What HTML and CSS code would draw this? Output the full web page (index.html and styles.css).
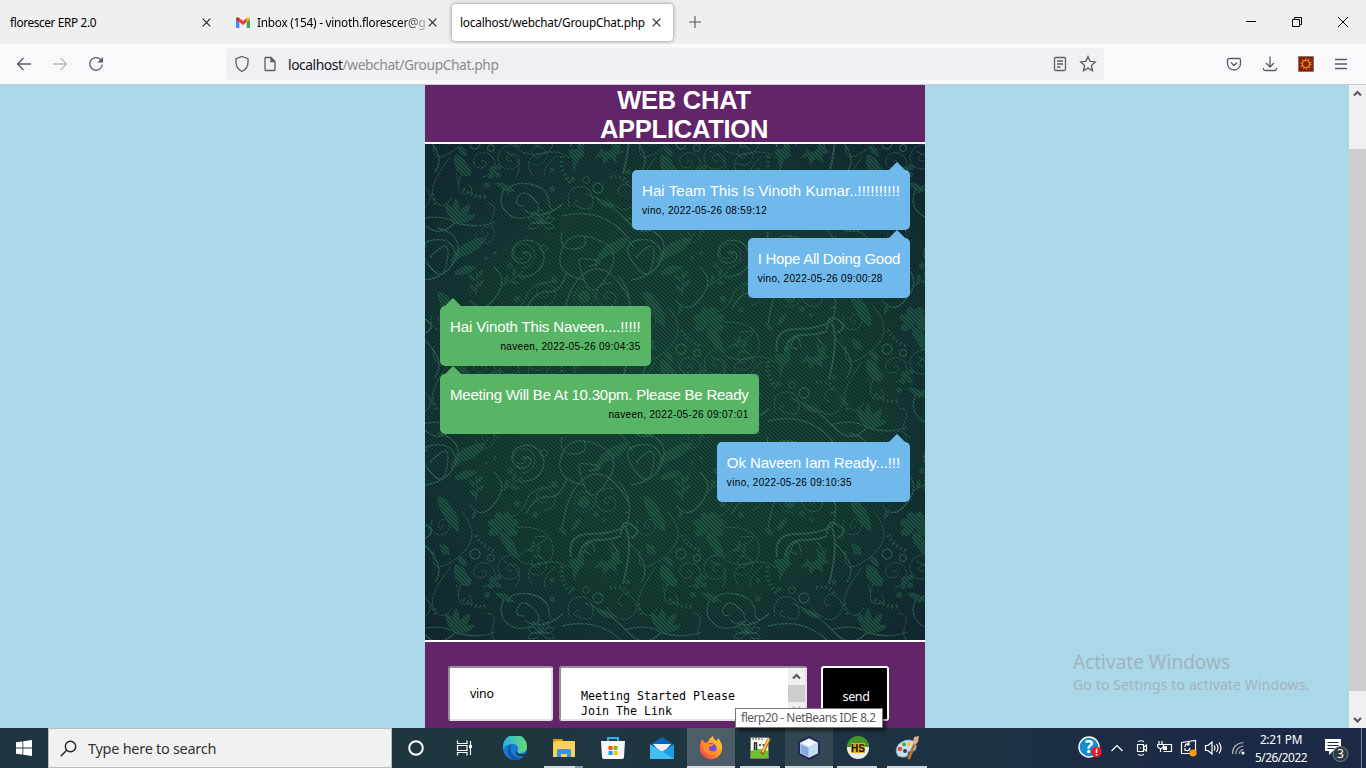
FILE: index.html
```html
<!DOCTYPE html>
<html lang="en">
<head>
<meta charset="utf-8">
<title>Group Chat</title>
<link rel="stylesheet" href="styles.css">
</head>
<body>
<div class="tabs">
  <div class="tab tab-a"><span class="t1">florescer ERP 2.0</span><svg class="x" width="9" height="9" viewBox="0 0 9 9"><path d="M.7.7l7.6 7.6M8.3.7L.7 8.3"/></svg></div>
  <div class="tab tab-b">
    <svg width="14" height="11" viewBox="0 0 14 11"><path fill="#4285f4" d="M0 2v8q0 1 1 1h2.300V4z"/><path fill="#34a853" d="M14 2v8q0 1-1 1h-2.300V4z"/><path fill="#ea4335" d="M3.200 1L7 4l3.800-3v4L7 8 3.200 5z"/><path fill="#c5221f" d="M0 2Q0 .2 1.400.2 2.400.2 3.300 1v4L0 2.600z"/><path fill="#fbbc04" d="M14 2Q14 .2 12.600.2q-1 0-1.900.8v4L14 2.600z"/></svg>
    <span class="t2">Inbox (154) - vinoth.florescer@g</span><svg class="x" width="9" height="9" viewBox="0 0 9 9"><path d="M.7.7l7.6 7.6M8.3.7L.7 8.3"/></svg></div>
  <div class="tab tab-c"><span class="t3">localhost/webchat/GroupChat.php</span><svg class="x" width="9" height="9" viewBox="0 0 9 9"><path d="M.7.7l7.6 7.6M8.3.7L.7 8.3"/></svg></div>
  <svg class="plus" width="12" height="12" viewBox="0 0 12 12"><path d="M6 0v12M0 6h12"/></svg>
  <div class="win">
    <svg width="12" height="12" viewBox="0 0 12 12"><path d="M1 5.500h10"/></svg>
    <svg width="12" height="12" viewBox="0 0 12 12"><path d="M1.500 3.500h7v7h-7zM3.500 3V1.500h7v7H9"/></svg>
    <svg width="12" height="12" viewBox="0 0 12 12"><path d="M1 1l10 10M11 1L1 11"/></svg>
  </div>
</div>
<div class="toolbar">
  <div class="nav">
    <svg width="16" height="16" viewBox="0 0 16 16"><path d="M15 8H1.500M7.500 2L1.500 8l6 6"/></svg>
    <svg class="dim" width="16" height="16" viewBox="0 0 16 16"><path d="M1 8h13.500M8.500 2l6 6-6 6"/></svg>
    <svg width="16" height="16" viewBox="0 0 16 16"><path d="M12.500 3.500A6.300 6.300 0 1 0 14.300 8.500"/><path fill="#5b5b66" stroke="none" d="M15 1v5.500H9.300z"/></svg>
  </div>
  <div class="url">
    <svg width="16" height="18" viewBox="0 0 16 18"><path d="M8 1.500l6 2.200v3.500q0 6.300-6 9.300-6-3-6-9.300V3.700z"/></svg>
    <svg class="page" width="14" height="16" viewBox="0 0 14 16"><path d="M2.500 1.500H8l4 4v8q0 1-1 1H3q-1 0-1-1v-11q0-1 .5-1z"/><path d="M8 2v3.500h4" fill="#5b5b66"/></svg>
    <span class="addr"><b>localhost</b>/webchat/GroupChat.php</span>
    <svg class="reader" width="14" height="16" viewBox="0 0 14 16"><rect x="1.500" y="1.500" width="11" height="13" rx="1.500"/><path d="M4 5h6M4 8h6M4 11h3.500"/></svg>
    <svg width="18" height="18" viewBox="0 0 18 18"><path d="M9 1.500l2.100 4.800 5.200.6-3.900 3.500 1.100 5.200L9 13l-4.500 2.600 1.100-5.200-3.900-3.500 5.200-.6z"/></svg>
  </div>
  <div class="acts">
    <svg width="16" height="16" viewBox="0 0 16 16"><path d="M3 2.500h10q1.500 0 1.500 1.500v3.500a6.500 6.500 0 0 1-13 0V4q0-1.500 1.500-1.500zM5 6.500l3 3 3-3"/></svg>
    <svg width="16" height="16" viewBox="0 0 16 16"><path d="M8 .5v10M4 7l4 4 4-4M1.500 12v1q0 1.500 1.500 1.500h10q1.500 0 1.500-1.500v-1"/></svg>
    <svg width="16" height="16" viewBox="0 0 16 16"><path fill="#8d1c04" stroke="#86776c" stroke-width="1" d="M.5.5h15v15H.5z"/><circle class="gear" cx="8" cy="8" r="3.600"/><circle class="gear teeth" cx="8" cy="8" r="5"/></svg>
    <svg width="14" height="16" viewBox="0 0 14 16"><path d="M1 3.500h12M1 8h12M1 12.500h12"/></svg>
  </div>
</div>
<main class="view">
  <section class="app">
    <h1 class="head">WEB CHAT<br>APPLICATION</h1>
    <div class="chat">
      <svg class="paper" width="500" height="496" viewBox="0 0 500 496">
        <defs>
          <pattern id="weave" width="4" height="4" patternUnits="userSpaceOnUse"><path d="M-1-1l6 6M-1 3l2 2M3-1l2 2" stroke="#07161b" stroke-width="1.100" opacity=".55"/></pattern>
          <radialGradient id="glow" cx=".5" cy=".5" r=".7"><stop offset="0" stop-color="#194b3b"/><stop offset=".5" stop-color="#174437"/><stop offset="1" stop-color="#132a34"/></radialGradient>
          <g id="petal"><path d="M0 0Q-6-8 0-14 6-8 0 0z"/></g>
          <g id="round"><path d="M0 0C-7-7-5-16 0-16S7-7 0 0z"/></g>
          <g id="sprig"><path class="ln" d="M0 14Q2 0 0-12"/><ellipse cx="4" cy="-8" rx="4.500" ry="2" transform="rotate(-50 4 -8)"/><ellipse cx="-4" cy="-4" rx="4.500" ry="2" transform="rotate(50 -4 -4)"/><ellipse cx="5" cy="1" rx="4.500" ry="2" transform="rotate(-50 5 1)"/><ellipse cx="-3" cy="6" rx="4.500" ry="2" transform="rotate(50 -3 6)"/></g>
          <g id="curl"><path class="ln" d="M0 0c4-4 8 2 3 5s-12-1-10-8 14-9 19-1 0 18-11 19"/></g>
          <g id="tile">
            <path class="lf" d="M26 29Q33 14 45 11 55 6 62 8 54 22 42 25 34 27 26 37z"/>
            <path class="lf" d="M30 41q12-9 22-4-8 9-22 8zM170 30q8-16 20-19 9-5 16-4-8 15-20 18-9 2-16 13z"/>
            <path class="ln w2" d="M0 50Q26 46 32 25T12-2M31 26Q28 7 8 10T3 34 22 32 14 19 7 27"/>
            <path class="ln w2" d="M137 2q-4 18 12 17t10-13M160 50q-31-5-24-28t35-13 12 36-23 7-6-22 15 0-5 6"/>
            <use href="#curl" x="96" y="23"/><use href="#curl" transform="translate(98 24) scale(1.500)"/>
            <use href="#curl" transform="translate(118 62) scale(.9)"/><use href="#curl" transform="translate(18 90) rotate(120) scale(.8)"/><use href="#curl" transform="translate(184 68) rotate(200)"/><use href="#curl" transform="translate(62 2) rotate(90) scale(.8)"/><use href="#curl" transform="translate(112 128) rotate(40) scale(.8)"/>
            <circle class="ln" cx="119" cy="18" r="3.500"/><circle cx="61" cy="28" r="2"/><circle cx="70" cy="23" r="2"/><circle cx="85" cy="36" r="3"/>
            <use href="#sprig" x="51" y="52"/><use href="#sprig" transform="translate(88 48) rotate(55)"/><use href="#sprig" transform="translate(110 116) rotate(-40) scale(.8)"/>
            <path class="ln w2" d="M69 37Q84 50 70 68T45 70M137 95Q142 55 160 43t35 11 5 24M101 79q9-18 22-17t19-20M193 46q18 18 8 46"/>
            <circle cx="159" cy="67" r="6.500"/><circle class="burst" cx="159" cy="67" r="10"/>
            <circle cx="92" cy="69" r="3.500"/><circle cx="110" cy="80" r="3"/><circle cx="171" cy="79" r="3"/><circle cx="180" cy="85" r="2"/><circle cx="129" cy="49" r="3"/>
            <path class="lf" d="M12 62Q20 59 27 72q9 13 7 25-8-3-12-12Q14 77 12 62zM47 85q-1-8 4-12 3 7-4 12zM146 96q0-9 10-14 0 11-10 14zM133 92q8 0 9 9-7-1-9-9z"/>
            <path class="ln" d="M36 76Q60 102 32 123T9 116M92 92q34-1 36 20t-23 17 3-17 1-10M74 84Q96 84 101 67t32-15"/>
            <g transform="translate(78 92)"><use href="#round" transform="rotate(20)"/><use href="#round" transform="rotate(-22)"/><use href="#round" transform="rotate(70)"/><use href="#round" transform="rotate(-70)"/><use href="#round" transform="rotate(118)"/><use href="#round" transform="rotate(-118)"/></g>
            <path class="lf" d="M76 96q14 4 18 28-11-3-14-13-7-4-4-15z"/>
            <path class="dots" d="M51 100q3 9 18 16M137 131q-2 17 9 27M185 153q14-4 19 8"/>
            <circle class="ln w2" cx="50" cy="119" r="5"/><circle class="ln w2" cx="66" cy="123" r="3.300"/>
            <path class="lf" d="M14 108l9 3 2 9-8-1zM147 134q-9-12 5-10 1-10 9-9-4 7-1 15-8 4-11 18z"/>
            <path class="ln w3" d="M146 122Q142 99 165 99T201 91M154 121q3-16 18-16t24-4M201 93q7 17-3 56M196 99q0-16 11-9t-1 13"/>
            <path class="ln w2" d="M186 107q13 15 4 23t-14-6M166 119q-9-1-4-9t8 7M204 108q24 23 12 39"/>
            <path class="lf" d="M184 109l5 9 7-3-3 9 6 3-8 3 1 8-7-5-6 7-2-8-8 1 6-7q9 3 12-3z"/>
            <path class="lf" d="M30 129q9 1 13 12 6 2 2 10-8 2-12-5-4 2 1 16l-2-16q-5-7-2-17zM32 121q10-1 10 11-9-2-10-11z"/>
            <use href="#curl" x="56" y="137"/><use href="#curl" transform="translate(87 135) rotate(180)"/>
            <path class="ln" d="M107 150q-10-18 9-22t29 5M131 131q-13 10-12 21M36 149q-7 20 4 20t4-10M79 126q22 9 12 26M25 132Q0 165 10 176t17-4"/>
            <g class="blooms"><circle cx="68" cy="145" r="4"/><circle cx="74" cy="142" r="3"/><circle cx="73" cy="150" r="3"/><circle cx="66" cy="151" r="3"/><circle cx="62" cy="160" r="3"/><circle cx="127" cy="164" r="3"/><circle cx="127" cy="145" r="2.500"/><circle cx="148" cy="154" r="2.500"/><circle cx="203" cy="147" r="2.500"/></g>
            <path class="lf" d="M70 158q10-3 21 9-14 1-21-9zM170 174q11-1 22 8-13 4-22-8z"/>
            <circle class="ln" cx="161" cy="155" r="3.300"/><circle class="ln w2" cx="173" cy="163" r="5"/>
            <path class="ln w2" d="M82 168q3-12 22-9t20 18 14 1M99 181q-11 0-6-9t16 2-3 17-24-3-3-24M137 180q-21 17-38 5"/>
            <path class="ln" d="M144 182q-4-18 9-20t15 12-12 9-2-8M198 171q-8-2-3-9t13 2-2 18-25-10M62 178q11 1 6 13t6 17"/>
            <g transform="translate(31 198)"><use href="#petal" transform="scale(1.300 1.800)"/><use href="#petal" transform="rotate(36) scale(1.300 1.750)"/><use href="#petal" transform="rotate(-27) scale(1.200 1.700)"/><use href="#petal" transform="rotate(68) scale(1.100 1.500)"/><path class="ln w2" d="M0 0Q-14-10-38-3M0 0q22 6 39-1"/></g>
            <g class="ln" transform="translate(116 198)"><use href="#petal"/><use href="#petal" transform="rotate(35)"/><use href="#petal" transform="rotate(-35)"/><use href="#petal" transform="rotate(70)"/><use href="#petal" transform="rotate(-70)"/><use href="#petal" transform="rotate(110)"/><use href="#petal" transform="rotate(-110)"/></g>
            <path class="dots" d="M38 164q13 10 24 7M7 169l4 12"/>
            <path class="ln w2" d="M160 168q25 9 43 29t36-3M137 191q24-6 43 3t28 28"/>
          </g>
        </defs>
        <rect width="500" height="496" fill="url(#glow)"/>
        <g class="flora">
          <use href="#tile" x="-206" y="-119"/><use href="#tile" y="-119"/><use href="#tile" x="206" y="-119"/><use href="#tile" x="412" y="-119"/>
          <use href="#tile" x="-206" y="86"/><use href="#tile" y="86"/><use href="#tile" x="206" y="86"/><use href="#tile" x="412" y="86"/>
          <use href="#tile" x="-206" y="291"/><use href="#tile" y="291"/><use href="#tile" x="206" y="291"/><use href="#tile" x="412" y="291"/>
        </g>
        <rect width="500" height="496" fill="url(#weave)"/>
      </svg>
      <div class="msg mine"><p class="m1">Hai Team This Is Vinoth Kumar..!!!!!!!!!!</p><small>vino, 2022-05-26 08:59:12</small></div>
      <div class="msg mine"><p class="m2">I Hope All Doing Good</p><small>vino, 2022-05-26 09:00:28</small></div>
      <div class="msg other"><p class="m3">Hai Vinoth This Naveen....!!!!!</p><small>naveen, 2022-05-26 09:04:35</small></div>
      <div class="msg other"><p class="m4">Meeting Will Be At 10.30pm. Please Be Ready</p><small>naveen, 2022-05-26 09:07:01</small></div>
      <div class="msg mine"><p class="m5">Ok Naveen Iam Ready...!!!</p><small>vino, 2022-05-26 09:10:35</small></div>
    </div>
    <div class="compose">
      <div class="field name">vino</div>
      <div class="field text"><span>Meeting Started Please<br>Join The Link</span>
        <div class="mini"><svg width="17" height="17" viewBox="0 0 17 17"><path d="M5 10.500L8.500 7l3.500 3.500"/></svg><i></i><svg class="faint" width="17" height="17" viewBox="0 0 17 17"><path d="M5 5l3.500 3.500L12 5"/></svg></div>
      </div>
      <div class="send">send</div>
    </div>
  </section>
  <div class="mark"><span class="mk1">Activate Windows</span><span class="mk2">Go to Settings to activate Windows.</span></div>
  <div class="scroll"><svg width="17" height="17" viewBox="0 0 17 17"><path d="M5 10.500L8.500 7l3.500 3.500"/></svg><i></i><svg width="17" height="17" viewBox="0 0 17 17"><path d="M5 7l3.500 3.500L12 7"/></svg></div>
</main>
<footer class="task">
  <div class="start"><svg width="16" height="16" viewBox="0 0 16 16"><path fill="#fff" d="M0 2.300l6.500-.9v6.200H0zM7.300 1.300L16 0v7.600H7.300zM0 8.400h6.500v6.200L0 13.700zM7.300 8.400H16V16l-8.700-1.300z"/></svg></div>
  <div class="search"><svg width="17" height="17" viewBox="0 0 17 17"><circle cx="10.500" cy="6.500" r="5.200"/><path d="M6.700 10.300L.8 16.200"/></svg><span>Type here to search</span></div>
  <div class="apps">
    <div class="cell first"><svg width="18" height="18" viewBox="0 0 18 18"><circle cx="9" cy="9" r="6.800" fill="none" stroke="#fff" stroke-width="2"/></svg></div>
    <div class="cell first"><svg width="18" height="18" viewBox="0 0 18 18"><path fill="none" stroke="#fff" stroke-width="1.200" d="M1.500 1.500v3h9.500v-3M1.500 16.500v-3H11v3M1.500 6.500H11v5H1.500zM14.500 2v14"/><path fill="#fff" d="M13 6h3v3h-3z"/></svg></div>
    <div class="cell"><svg width="24" height="24" viewBox="0 0 24 24"><defs><linearGradient id="eg"><stop stop-color="#2ab1e8"/><stop offset="1" stop-color="#65dc72"/></linearGradient></defs><circle cx="12" cy="12" r="12" fill="#157bd1"/><path fill="url(#eg)" d="M0 10A12 12 0 0 1 24 11q0 5-6 6-5 0-3-3 1-6-6-6-6 0-9 5z"/><path fill="#1454a5" d="M9 8q-4 6 1 11 4 4 9 3a12 12 0 0 1-8 2Q3 19 5 12q1-3 4-4z"/><path fill="#20343f" d="M14 14q-2 2 2 4 4 1 7-1l1 1-3 2q-6 1-8-2-1-3 1-4z"/></svg></div>
    <div class="cell files"><svg width="22" height="20" viewBox="0 0 22 20"><path fill="#dc970d" d="M0 1h9l2 3v4H0z"/><path fill="#fbd15d" d="M0 5l3-2h19v16H0z"/><path fill="#3593df" d="M4 19v-6q0-2 2-2h10q2 0 2 2v6h-4v-3H8v3z"/></svg></div>
    <div class="cell"><svg width="24" height="24" viewBox="0 0 24 24"><path fill="none" stroke="#23b5ec" stroke-width="2" d="M7 7V2h10v5"/><path fill="#f7f7f7" d="M0 5h24l-1 16q0 2-2 2H3q-2 0-2-2z"/><path fill="#f35325" d="M7.500 10h4v4h-4z"/><path fill="#81bc06" d="M12.500 10h4v4h-4z"/><path fill="#05a6f0" d="M7.500 15h4v4h-4z"/><path fill="#ffba08" d="M12.500 15h4v4h-4z"/></svg></div>
    <div class="cell"><svg width="24" height="24" viewBox="0 0 24 24"><path fill="#0b63b6" d="M0 8.500L12 1l12 7.500-12 7z"/><path fill="#f1f1f1" d="M3 8h18l-9 10z"/><path fill="#1e9de4" d="M0 8.500l12 7 12-7V23H0z"/><path fill="#41bef3" d="M0 8.500l12 7L24 23H0z"/></svg></div>
    <div class="cell active"><svg width="24" height="24" viewBox="0 0 24 24"><defs><linearGradient id="ff" x1="1" x2="0" y2="1"><stop stop-color="#ffe62e"/><stop offset=".5" stop-color="#ff9228"/><stop offset="1" stop-color="#fb235e"/></linearGradient></defs><path fill="url(#ff)" d="M3 3l3 4 3-1q1-4 5-6 0 3 4 5l1-3q5 6 4 12a11.300 11.300 0 0 1-22 1Q0 9 3 3z"/><circle cx="12" cy="12.500" r="5.500" fill="#7547dc"/><path fill="#ff8b26" d="M4 8q4-2 6 0h5q-2 3-5 3-1 3 2 4 3 1 5-1-1 6-7 5-6-2-6-11z"/></svg></div>
    <div class="cell run"><svg width="24" height="24" viewBox="0 0 24 24"><path fill="#f7f8f2" stroke="#737873" d="M2.500 1.500h18v21h-18z"/><path fill="#6fc22d" d="M3 15q9-4 17 0v7H3z"/><path fill="none" stroke="#272b29" stroke-width="1.500" d="M6.500 14V7h2v7M11 9h2M14.500 9h2"/><path fill="none" stroke="#555" d="M5 2v2M8 2v2M11 2v2M14 2v2"/><path stroke="#7c561c" stroke-width="3.600" d="M14 18l7-15"/><path stroke="#ffbd38" stroke-width="2.400" d="M14.500 16.500l6.500-14"/></svg></div>
    <div class="cell hover"><svg width="24" height="24" viewBox="0 0 24 24"><path fill="#cad9f1" stroke="#252954" stroke-width="2" d="M12 1l10 5v12l-10 5-10-5V6z"/><path fill="#f3f7ff" d="M12 3l8 3.500-8 4-8-4z"/><path fill="#86abe1" d="M3.500 8l8 4v9l-8-4z"/><path fill="#c4e1e9" d="M12.500 12l8-4v9l-8 4z"/></svg></div>
    <div class="cell run hsc"><svg width="24" height="24" viewBox="0 0 24 24"><circle cx="12" cy="12" r="11" fill="#e8eeee"/><path fill="#40972b" d="M1 11A11 11 0 0 1 23 11z"/><rect x="5" y="7" width="14" height="10" fill="#e9a51b"/><text x="12" y="16" text-anchor="middle" class="hs">HS</text></svg></div>
    <div class="cell run"><svg width="25" height="24" viewBox="0 0 25 24"><path fill="#c9e1ef" stroke="#7eabc7" d="M3 20q-4-6 1-12 7-6 14-3 5 4 2 9-2 2-5 1-3 0-2 3-1 5-10 2z"/><circle cx="5" cy="13" r="2.200" fill="#de4d35"/><circle cx="9" cy="8.500" r="2" fill="#50aa46"/><circle cx="14" cy="8" r="2" fill="#efc63e"/><circle cx="10" cy="15" r="2" fill="#263f50"/><path stroke="#bb7430" stroke-width="3" stroke-linecap="round" d="M14 22l6-15"/><path fill="#ddb08a" d="M18 6l1-5 5-1-1 6-3 3z"/></svg></div>
  </div>
  <div class="tray">
    <svg class="help" width="24" height="24" viewBox="0 0 24 24"><circle cx="11" cy="11" r="10" fill="#168bce" stroke="#fff" stroke-width="1.400"/><text x="11" y="17" text-anchor="middle" class="q">?</text><circle cx="18.500" cy="16" r="5.300" fill="#e81b25"/><path stroke="#fff" stroke-width="1.500" d="M18.500 12.500v4.500M18.500 18v1.500"/></svg>
    <svg class="ti chev" width="14" height="16" viewBox="0 0 14 16"><path d="M1.500 11L7 5.500l5.500 5.500"/></svg>
    <svg class="ti cam" width="12" height="16" viewBox="0 0 12 16"><path d="M1.500 4.500h6v7h-6zM8 7l2.500-2v6L8 9M2 1.500q3-1.500 6 0M2 14.500q3 1.500 6 0"/><path d="M4 8h1"/></svg>
    <svg class="ti bat" width="17" height="16" viewBox="0 0 17 16"><path d="M6.500 4.500h9v7h-8M3 1v3M6 1v3M1.500 4.500h6q0 4-3 4-3 0-3-4M4.500 8v4"/><path fill="#fff" d="M7 6h4v4H7z" stroke="none"/></svg>
    <svg class="ti upd" width="17" height="18" viewBox="0 0 17 18"><path d="M1.500 3.500l14-2v13h-14zM9 5q-4-1-4 3M5 11q4 2 5-2M9 3v3H7M5 12V9"/><circle cx="13" cy="14" r="3.600" fill="#ff980a" stroke="none"/></svg>
    <svg class="ti snd" width="18" height="16" viewBox="0 0 18 16"><path d="M1.500 5.500H4l4-3.500v12l-4-3.500H1.500zM10 5.500q2 2.500 0 5M12.500 4q3 4 0 8M15 2.500q4 5.500 0 11"/></svg>
    <svg class="ti wifi" width="14" height="16" viewBox="0 0 14 16"><path d="M1.500 14Q1.500 3.500 12.500 2.500M5 14q0-7 7.500-8M8.500 14q0-4 4-4.500" opacity=".65"/><circle cx="12" cy="13" r="1.500" fill="#fff" stroke="none"/></svg>
    <div class="clock"><span>2:21 PM</span><span class="date">5/26/2022</span></div>
    <svg class="note" width="26" height="26" viewBox="0 0 26 26"><path fill="#fff" d="M1 2h16v12H9l-4 4v-4H1z"/><path stroke="#1b2c40" d="M3.500 5.500h11M3.500 8.500h11M3.500 11.500h7"/><circle cx="16.500" cy="17" r="7.500" fill="#303a43" stroke="#75808a"/><text x="16.500" y="21" text-anchor="middle" class="n3">3</text></svg>
  </div>
</footer>
<div class="tip">flerp20 - NetBeans IDE 8.2</div>
</body>
</html>
```
FILE: styles.css
```css
* { box-sizing: border-box; }
body { margin: 0; width: 1366px; height: 768px; overflow: hidden; display: flex; flex-direction: column; font: 12px "Noto Sans", sans-serif; color: #000; position: relative; }
svg { flex: none; }
i { display: block; }
.tabs { height: 44px; flex: none; background: #efefef; display: flex; align-items: center; }
.tab { display: flex; align-items: center; justify-content: space-between; height: 44px; white-space: nowrap; }
.tab .x { fill: none; stroke: #222; stroke-width: 1.1; }
.tab-a { width: 211px; padding-left: 10px; }
.tab-b { width: 226px; padding-left: 25px; margin-right: 15px; }
.tab-c { width: 221px; height: 37px; padding: 0 12px 0 8px; background: #fff; border-radius: 4px; box-shadow: 0 0 4px #888; }
.t1 { font-size: 11.800px; letter-spacing: -.36px; }
.t2 { font-size: 11.800px; letter-spacing: -.25px; margin-left: 7px; margin-right: auto; -webkit-mask-image: linear-gradient(90deg, #000 146px, transparent 176px); }
.t3 { font-size: 11.800px; letter-spacing: -.2px; }
.plus { margin-left: 16px; stroke: #555; stroke-width: 1.1; }
.win { margin-left: auto; display: flex; gap: 34px; padding-right: 17px; }
.win svg { fill: none; stroke: #000; stroke-width: 1; }
.toolbar { height: 41px; flex: none; background: #f9f9fb; border-bottom: 1px solid #ccc; display: flex; align-items: center; }
.toolbar svg { fill: none; stroke: #5b5b66; stroke-width: 1.300; }
.toolbar .gear { stroke: #d99a26; stroke-width: 1.3; }
.toolbar .teeth { stroke-width: 1.4; stroke-dasharray: 1.2 1.94; }
.nav { display: flex; gap: 20px; width: 226px; padding-left: 16px; }
.dim { opacity: .4; }
.url { width: 878px; height: 32px; border-radius: 4px; background: #f0f0f4; display: flex; align-items: center; padding: 0 7px 0 8px; }
.page { margin-left: 13px; }
.addr { margin-left: 11px; font-size: 13.800px; color: #8a8a90; letter-spacing: -.42px; }
.addr b { color: #15141a; font-weight: 400; }
.reader { margin-left: auto; margin-right: 12px; }
.acts { display: flex; gap: 20px; padding-left: 122px; }
.view { height: 643px; flex: none; background: #abd8e8; position: relative; display: flex; justify-content: flex-end; }
.app { width: 500px; margin-right: 441px; display: flex; flex-direction: column; background: #622569; }
.head { margin: 0; height: 59px; padding: 1px 0 0 18px; border-bottom: 2px solid #fff; color: #fff; font: bold 25.500px/29px "Liberation Sans", Arial, sans-serif; letter-spacing: -.25px; text-align: center; flex: none; }
.chat { height: 496px; flex: none; position: relative; padding: 26px 15px 0; display: flex; flex-direction: column; gap: 8px; font-family: "Liberation Sans", Arial, sans-serif; overflow: hidden; }
.paper { position: absolute; left: 0; top: 0; }
.flora { fill: #2a6a50; opacity: .55; }
.ln { fill: none; stroke: #468a6d; stroke-width: .9; }
.w2 { stroke-width: 1.300; }
.w3 { stroke-width: 2; }
.burst { fill: none; stroke: #36765c; stroke-width: 3; stroke-dasharray: 1.200 2; }
.dots { fill: none; stroke: #36765c; stroke-width: 4; stroke-dasharray: 2 2.500; }
.msg { position: relative; height: 60px; border-radius: 5px; padding: 11px 10px 0; white-space: nowrap; }
.msg::before { content: ""; position: absolute; top: -8px; border: 8px solid transparent; border-top: 0; }
.msg p { margin: 0; font-size: 15px; line-height: 20px; color: #fff; }
.m1 { letter-spacing: .07px; }
.m2 { letter-spacing: -.29px; }
.m3 { letter-spacing: -.13px; }
.m4 { letter-spacing: -.23px; }
.m5 { letter-spacing: -.1px; }
.msg small { display: block; font-size: 10px; line-height: 20px; letter-spacing: .33px; color: #000; }
.mine { background: #70b9ed; align-self: flex-end; }
.mine::before { right: 5px; border-bottom-color: #70b9ed; }
.other { background: #59b566; align-self: flex-start; }
.other::before { left: 5px; border-bottom-color: #59b566; }
.other small { text-align: right; }
.compose { flex: 1; border-top: 2px solid #fff; display: flex; padding: 24px 0 0 23px; }
.field { height: 55px; background: #fff; border: 2px solid; border-color: #929292 #e2e2e2 #e2e2e2 #929292; border-radius: 3px; }
.name { width: 105px; padding: 17px 20px; font-size: 12.300px; line-height: 17px; letter-spacing: -.2px; }
.text { width: 248px; margin-left: 6px; display: flex; justify-content: space-between; font: 11.630px/15px "DejaVu Sans Mono", monospace; padding-left: 20px; overflow: hidden; }
.text span { padding-top: 21px; white-space: nowrap; }
.mini { width: 17px; background: #f0f0f0; }
.mini svg, .scroll svg { display: block; fill: none; stroke: #555; stroke-width: 2; }
.mini i { height: 17px; background: #cdcdcd; }
.faint { opacity: .4; }
.send { margin-left: 14px; width: 68px; height: 55px; background: #000; color: #fff; border: 2px solid #fff; border-radius: 3px; padding: 20px 0 0 2px; text-align: center; font-size: 12.500px; letter-spacing: -.4px; }
.mark { position: absolute; left: 1073px; top: 565px; display: flex; flex-direction: column; color: #9fb4c0; white-space: nowrap; }
.mk1 { font-size: 19px; line-height: 25px; }
.mk2 { font-size: 14px; line-height: 20px; letter-spacing: .13px; }
.scroll { position: absolute; right: 0; top: 0; width: 17px; height: 643px; background: #f0f0f0; display: flex; flex-direction: column; justify-content: space-between; }
.scroll i { height: 542px; margin-top: 47px; margin-bottom: auto; background: #cdcdcd; }
.task { height: 40px; flex: none; background: linear-gradient(90deg, #1e3540, #20363f 40%, #1d3342 65%, #1b2946 90%, #1b2a44); display: flex; }
.start { width: 48px; display: grid; place-items: center; }
.search { width: 344px; background: #f1f1f1; border: 1px solid #b8bcbe; display: flex; align-items: center; padding-left: 11px; }
.search svg { fill: none; stroke: #222; stroke-width: 1.400; }
.search span { margin-left: 11px; font-size: 14.500px; letter-spacing: -.28px; color: #333; }
.apps { display: grid; grid-template-columns: repeat(11, 49px); }
.cell { display: grid; place-items: center; padding-left: 1px; }
.first { padding: 0 1px 0 0; }
.run { background: linear-gradient(#d3d7d9, #d3d7d9) 5px 38px / 40px 2px no-repeat; }
.hsc { background-position: 4px 38px; background-size: 31px 2px; background-size: 40px 2px; }
.files { background: linear-gradient(90deg, #d3d7d9 31px, #8d9599 31px) 5px 38px / 39px 2px no-repeat; }
.active { background: linear-gradient(#d8dadb, #d8dadb) 1px 38px / 48px 2px no-repeat, linear-gradient(#4b5d66, #4b5d66) 1px 0 / 48px 40px no-repeat; }
.hover { background: linear-gradient(#d3d7d9, #d3d7d9) 1px 38px / 48px 2px no-repeat, linear-gradient(#334653, #334653) 1px 0 / 48px 40px no-repeat; }
.hs { font: bold 10px "Liberation Sans", sans-serif; fill: #111; }
.tray { margin-left: 147px; display: flex; align-items: center; flex: 1; border-right: 1px solid #7d8593; margin-right: 4px; }
.q { font: bold 17px "Noto Sans", sans-serif; fill: #fff; }
.ti { fill: none; stroke: #fff; stroke-width: 1.200; }
.chev { margin-left: 8px; }
.cam { margin-left: 12px; }
.bat { margin-left: 8px; }
.upd { margin-left: 7px; }
.snd { margin-left: 7px; }
.wifi { margin-left: 9px; }
.clock { margin-left: 6px; width: 60px; display: flex; flex-direction: column; text-align: center; color: #fff; font-size: 11.800px; line-height: 18px; letter-spacing: -.3px; white-space: nowrap; }
.date { letter-spacing: -.45px; }
.note { margin-left: 13px; margin-top: 3px; }
.n3 { font: 12px "Noto Sans", sans-serif; fill: #fff; }
.tip { position: absolute; left: 735px; top: 708px; width: 148px; height: 20px; background: #fff; border: 1px solid #767676; box-shadow: 3px 3px 3px rgba(0, 0, 0, .5); color: #575757; padding-left: 5px; line-height: 17px; font-size: 11.800px; letter-spacing: -.4px; white-space: nowrap; }
```
